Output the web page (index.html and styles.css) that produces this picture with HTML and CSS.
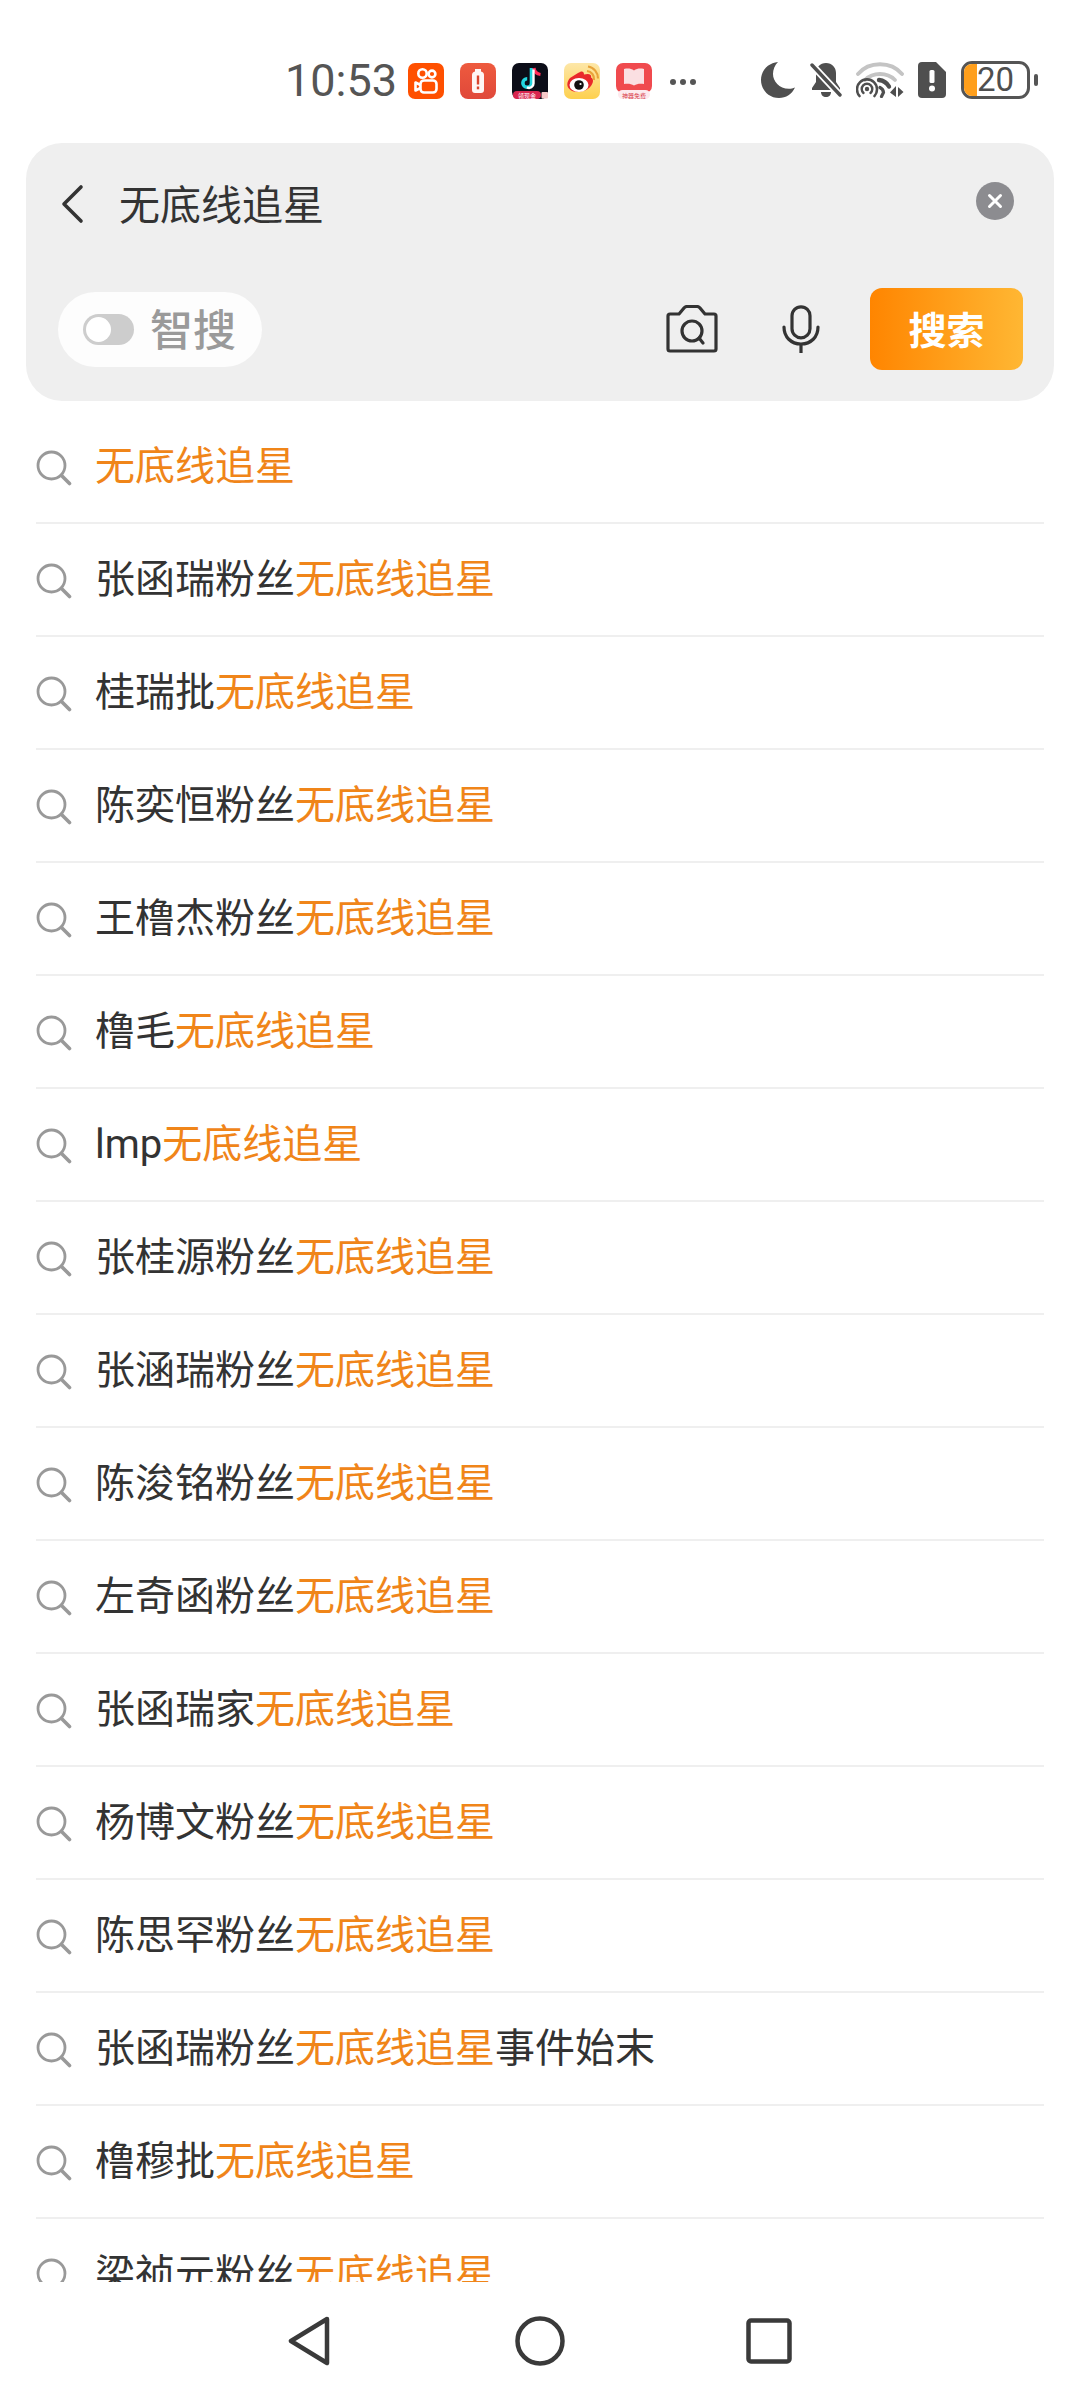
FILE: index.html
```html
<!DOCTYPE html>
<html lang="zh">
<head>
<meta charset="utf-8">
<title>无底线追星</title>
<link rel="stylesheet" href="styles.css">
</head>
<body>
<div class="screen">
  <header class="status">
    <span class="time">10:53</span>
    <div class="apps">
      <svg class="app" viewBox="0 0 36 36"><rect width="36" height="36" rx="7" fill="#ff5000"/><g fill="none" stroke="#fff" stroke-width="2.6" stroke-linejoin="round"><circle cx="14.5" cy="10.5" r="4.2"/><circle cx="24" cy="11" r="3.4"/><rect x="12.5" y="17.5" width="16" height="12" rx="3.5"/><path d="M12.5 22 7.5 19.5v8l5-2.5"/></g></svg>
      <svg class="app" viewBox="0 0 36 36"><defs><linearGradient id="redg" x1="0" y1="0" x2="0" y2="1"><stop offset="0" stop-color="#ee5a3e"/><stop offset="1" stop-color="#e0483a"/></linearGradient></defs><rect width="36" height="36" rx="8" fill="url(#redg)"/><path d="M15 6h6v2.500c2 .5 3 1.800 3 3.500v15a3 3 0 0 1-3 3h-6a3 3 0 0 1-3-3V12c0-1.700 1-3 3-3.500z" fill="#fff" opacity=".95"/><rect x="16.800" y="12.500" width="2.400" height="9" fill="#d9452f"/><rect x="16.800" y="23.500" width="2.400" height="2.800" fill="#d9452f"/></svg>
      <svg class="app" viewBox="0 0 36 36"><rect width="36" height="36" rx="7" fill="#0b0d18"/><path d="M19.500 5v15a4.300 4.300 0 1 1-4.300-4.300" fill="none" stroke="#23d6df" stroke-width="3.600"/><path d="M22 5c.5 3.500 3 6 6.500 6.500" fill="none" stroke="#ff2e58" stroke-width="3.200"/><path d="M21.500 6.500v14a4.300 4.300 0 0 1-6.500 3.800" fill="none" stroke="#fff" stroke-width="2.400"/><rect x="1" y="28" width="28" height="8" rx="4" fill="#d8264f"/><rect x="29.500" y="29" width="6.500" height="6.500" rx="1" fill="#f6c9c9"/><text class="tiny" x="15" y="34.500" text-anchor="middle">领现金</text></svg>
      <svg class="app" viewBox="0 0 36 36"><defs><linearGradient id="wb" x1="0" y1="0" x2="0" y2="1"><stop offset="0" stop-color="#fde7a8"/><stop offset="1" stop-color="#fdd04e"/></linearGradient></defs><rect width="36" height="36" rx="7" fill="url(#wb)"/><path d="M14 10c3.500-2.500 6-2 6 1.500 5-1.500 8 0 7 3 3 1.200 2.500 5.500-.5 9-4 5-14 7.500-20 3.500-4.300-3-4-8-.5-12z" fill="#e9282b"/><ellipse cx="15" cy="22" rx="9.500" ry="7" fill="#fff"/><circle cx="15" cy="22" r="4.800" fill="#111"/><circle cx="16.500" cy="21" r="1.100" fill="#fff"/><path d="M23 8a8 8 0 0 1 7 9M24 3.500a12 12 0 0 1 10 12" fill="none" stroke="#e8a33a" stroke-width="2.200"/></svg>
      <svg class="app" viewBox="0 0 36 36"><rect width="36" height="30" rx="7" fill="#f04a4e"/><rect x="2" y="27" width="32" height="9" rx="4.500" fill="#fdeaee"/><path d="M8 6c4-1 7-.5 10 1.500 3-2 6-2.500 10-1.500v15c-4-.8-7-.3-10 1.500-3-1.800-6-2.300-10-1.500z" fill="#fbdfe2"/><text class="tiny tiny-red" x="18" y="34.500" text-anchor="middle">神器免费</text></svg>
    </div>
    <div class="dots"><i></i><i></i><i></i></div>
    <div class="sys">
      <svg class="moon" viewBox="0 0 34 36"><path d="M17 0C7 1 0 8.500 0 18c0 10 8 18 18 18 7 0 13-4 16-10.500-2 1-4 1.300-6 1.300C18 26.800 12 19 12 12c0-4.500 1.800-9 5-12z" fill="#4f4f4f"/></svg>
      <svg class="bell" viewBox="0 0 32 36"><path d="M16 1c6 0 10 4.500 10 10v9l4 6v2H2v-2l4-6v-9C6 5.500 10 1 16 1z" fill="#4f4f4f"/><path d="M11 30h10c0 3-2 5-5 5s-5-2-5-5z" fill="#4f4f4f"/><path d="M2 3l28 30" stroke="#fff" stroke-width="7"/><path d="M2 3l28 30" stroke="#4f4f4f" stroke-width="3.400" stroke-linecap="round"/></svg>
      <svg class="wifi" viewBox="0 0 48 36"><g fill="none" stroke-linecap="round"><path d="M2 12C13 -1 35 -1 46 12" stroke="#c4c4c4" stroke-width="3.800"/><path d="M9 18c8-8 22-8 30 0" stroke="#c4c4c4" stroke-width="3.800"/><path d="M3.500 34a10 10 0 1 1 15 0" stroke="#4f4f4f" stroke-width="2.600"/><path d="M7.500 31a5.300 5.300 0 1 1 7 0" stroke="#4f4f4f" stroke-width="2.400"/><path d="M23 18c4 .5 8 3 10 6.500" stroke="#4f4f4f" stroke-width="4.400"/><path d="M24 25.500c2 1 3.300 2.800 3.500 5l-2 4" stroke="#4f4f4f" stroke-width="3.200"/></g><circle cx="11" cy="27" r="2.200" fill="#4f4f4f"/><path d="M40 24v11l-6-4.500zM42 25v10l5.500-5z" fill="#4f4f4f"/></svg>
      <svg class="sim" viewBox="0 0 28 36"><path d="M4 0h14l10 10v22a4 4 0 0 1-4 4H4a4 4 0 0 1-4-4V4a4 4 0 0 1 4-4z" fill="#4f4f4f"/><rect x="11.500" y="8" width="5" height="13" rx="1.500" fill="#fff"/><circle cx="14" cy="26.500" r="3" fill="#fff"/></svg>
      <div class="battery"><span class="charge"></span><span class="level">20</span></div>
      <span class="tip"></span>
    </div>
  </header>

  <section class="panel">
    <div class="query">
      <svg class="back" viewBox="0 0 24 40"><path d="M21 3 4 20l17 17" fill="none" stroke="#333" stroke-width="3.600" stroke-linecap="round" stroke-linejoin="round"/></svg>
      <span class="term">无底线追星</span>
      <span class="clear"><svg viewBox="0 0 38 38"><path d="M13.500 13.500l11 11m0-11l-11 11" stroke="#fff" stroke-width="3" stroke-linecap="round"/></svg></span>
    </div>
    <div class="tools">
      <div class="pill"><span class="toggle"><i></i></span><span class="pill-label">智搜</span></div>
      <svg class="camera" viewBox="0 0 52 48"><path d="M4 9h9l5-6c.8-1 1.500-1.500 3-1.500h10c1.500 0 2.200.5 3 1.500l5 6h9c1.200 0 2 .8 2 2v33c0 1.200-.8 2-2 2H4c-1.200 0-2-.8-2-2V11c0-1.200.8-2 2-2z" fill="none" stroke="#333" stroke-width="3.200" stroke-linejoin="round"/><circle cx="26" cy="26" r="10" fill="none" stroke="#333" stroke-width="3.200"/><path d="M33 33l4 5" stroke="#333" stroke-width="3.200" stroke-linecap="round"/></svg>
      <svg class="mic" viewBox="0 0 38 48"><rect x="10" y="1.800" width="18" height="31" rx="9" fill="none" stroke="#333" stroke-width="3.200"/><path d="M2 22c0 10 7 17 17 17s17-7 17-17M19 39v9" fill="none" stroke="#333" stroke-width="3.200" stroke-linecap="round"/></svg>
      <button class="go">搜索</button>
    </div>
  </section>

  <ul class="list">
    <li class="row"><svg class="glass" viewBox="0 0 36 36"><use href="#glass"/></svg><span><em>无底线追星</em></span></li>
    <li class="row"><svg class="glass" viewBox="0 0 36 36"><use href="#glass"/></svg><span>张函瑞粉丝<em>无底线追星</em></span></li>
    <li class="row"><svg class="glass" viewBox="0 0 36 36"><use href="#glass"/></svg><span>桂瑞批<em>无底线追星</em></span></li>
    <li class="row"><svg class="glass" viewBox="0 0 36 36"><use href="#glass"/></svg><span>陈奕恒粉丝<em>无底线追星</em></span></li>
    <li class="row"><svg class="glass" viewBox="0 0 36 36"><use href="#glass"/></svg><span>王橹杰粉丝<em>无底线追星</em></span></li>
    <li class="row"><svg class="glass" viewBox="0 0 36 36"><use href="#glass"/></svg><span>橹毛<em>无底线追星</em></span></li>
    <li class="row"><svg class="glass" viewBox="0 0 36 36"><use href="#glass"/></svg><span>lmp<em>无底线追星</em></span></li>
    <li class="row"><svg class="glass" viewBox="0 0 36 36"><use href="#glass"/></svg><span>张桂源粉丝<em>无底线追星</em></span></li>
    <li class="row"><svg class="glass" viewBox="0 0 36 36"><use href="#glass"/></svg><span>张涵瑞粉丝<em>无底线追星</em></span></li>
    <li class="row"><svg class="glass" viewBox="0 0 36 36"><use href="#glass"/></svg><span>陈浚铭粉丝<em>无底线追星</em></span></li>
    <li class="row"><svg class="glass" viewBox="0 0 36 36"><use href="#glass"/></svg><span>左奇函粉丝<em>无底线追星</em></span></li>
    <li class="row"><svg class="glass" viewBox="0 0 36 36"><use href="#glass"/></svg><span>张函瑞家<em>无底线追星</em></span></li>
    <li class="row"><svg class="glass" viewBox="0 0 36 36"><use href="#glass"/></svg><span>杨博文粉丝<em>无底线追星</em></span></li>
    <li class="row"><svg class="glass" viewBox="0 0 36 36"><use href="#glass"/></svg><span>陈思罕粉丝<em>无底线追星</em></span></li>
    <li class="row"><svg class="glass" viewBox="0 0 36 36"><use href="#glass"/></svg><span>张函瑞粉丝<em>无底线追星</em>事件始末</span></li>
    <li class="row"><svg class="glass" viewBox="0 0 36 36"><use href="#glass"/></svg><span>橹穆批<em>无底线追星</em></span></li>
    <li class="row"><svg class="glass" viewBox="0 0 36 36"><use href="#glass"/></svg><span>梁祯元粉丝<em>无底线追星</em></span></li>
  </ul>

  <nav class="nav">
    <svg class="nav-back" viewBox="0 0 44 50"><path d="M40 3 4 25l36 22z" fill="none" stroke="#3a3a3a" stroke-width="4.500" stroke-linejoin="round"/></svg>
    <svg class="nav-home" viewBox="0 0 50 50"><circle cx="25" cy="25" r="22.500" fill="none" stroke="#3a3a3a" stroke-width="4.500"/></svg>
    <svg class="nav-recent" viewBox="0 0 46 46"><rect x="2.500" y="2.500" width="41" height="41" rx="2.500" fill="none" stroke="#3a3a3a" stroke-width="4.500"/></svg>
  </nav>
</div>
<svg class="defs" width="0" height="0"><defs><g id="glass"><circle cx="15.500" cy="15.500" r="13.500" fill="none" stroke="#999" stroke-width="2.800"/><path d="M25.500 25.500l8 8" stroke="#999" stroke-width="3.600" stroke-linecap="round"/></g></defs></svg>
</body>
</html>
```

FILE: styles.css
```css
* { box-sizing: border-box; }
html, body { margin: 0; padding: 0; background: #fff; }
body { font-family: "Noto Sans CJK SC", "Noto Sans", sans-serif; color: #333; }
.screen { width: 1080px; height: 2400px; display: flex; flex-direction: column; overflow: hidden; }
.defs { position: absolute; }

.status { height: 143px; flex: none; display: flex; align-items: flex-start; padding: 61px 0 0 285px; }
.time { font: 400 45px/40px Roboto, sans-serif; color: #555; width: 123px; flex: none; }
.apps { display: flex; gap: 16px; margin-top: 2px; }
.app { width: 36px; height: 36px; display: block; }
.tiny { font-family: "Noto Sans CJK SC", sans-serif; font-size: 6px; fill: #fff; }
.tiny-red { fill: #d8404a; }
.dots { display: flex; gap: 4px; margin: 18px 0 0 18px; width: 91px; }
.dots i { width: 6px; height: 6px; border-radius: 50%; background: #555; }
.sys { display: flex; align-items: center; height: 38px; }
.moon { width: 34px; height: 36px; }
.bell { width: 32px; height: 36px; margin-left: 15px; }
.wifi { width: 48px; height: 36px; margin-left: 14px; }
.sim { width: 28px; height: 36px; margin-left: 14px; }
.battery { position: relative; width: 69px; height: 38px; margin-left: 15px; border: 3px solid #555; border-radius: 11px; overflow: hidden; display: flex; align-items: center; justify-content: center; }
.charge { position: absolute; left: 0; top: 0; bottom: 0; width: 13px; background: #ff9f1c; }
.level { position: relative; font: 400 33px/32px Roboto, sans-serif; color: #4f4f4f; }
.tip { width: 4px; height: 12px; border-radius: 2px; background: #555; margin-left: 4px; }

.panel { flex: none; margin: 0 26px; height: 258px; background: #efefef; border-radius: 36px; display: flex; flex-direction: column; }
.query { height: 145px; display: flex; align-items: flex-start; padding: 39px 0 0 34px; }
.back { width: 24px; height: 40px; flex: none; margin-top: 2px; }
.term { font-size: 41px; line-height: 44px; color: #333; margin: -2px 0 0 35px; flex: 1; }
.clear { width: 38px; height: 38px; flex: none; margin: 0 40px 0 0; border-radius: 50%; background: #8c8c90; }
.clear svg { display: block; width: 38px; height: 38px; }
.tools { display: flex; align-items: center; height: 82px; padding: 0 31px 0 32px; }
.pill { width: 204px; height: 75px; border-radius: 38px; background: #fdfdfd; display: flex; align-items: center; padding-left: 25px; }
.toggle { width: 51px; height: 31px; border-radius: 16px; background: #cdcdcd; padding: 3px; display: block; flex: none; }
.toggle i { display: block; width: 25px; height: 25px; border-radius: 50%; background: #fff; }
.pill-label { font-size: 43px; font-weight: 500; line-height: 50px; color: #9a9a9a; margin: 0 0 4px 16px; }
.camera { width: 52px; height: 48px; margin-left: 404px; flex: none; }
.mic { width: 38px; height: 48px; margin-left: 64px; flex: none; }
.go { width: 153px; height: 82px; margin-left: 50px; flex: none; border: 0; padding: 0 0 2px; border-radius: 12px; background: linear-gradient(90deg, #ff8500, #ffb733); color: #fff; font: 700 38px/44px "Noto Sans CJK SC", sans-serif; }

.list { flex: none; height: 1871px; margin: 10px 0 0; padding: 0 36px; list-style: none; overflow: hidden; }
.row { height: 113px; display: flex; align-items: center; gap: 23px; padding-top: 1px; border-bottom: 2px solid #efefef; font-family: Roboto, "Noto Sans CJK SC", sans-serif; font-size: 40px; line-height: 50px; color: #333; }
.row em { font-style: normal; color: #f08519; }
.glass { width: 36px; height: 36px; flex: none; margin-top: 2px; }

.nav { flex: 1; display: flex; align-items: flex-start; padding: 34px 0 0 287px; }
.nav-back { width: 44px; height: 50px; flex: none; }
.nav-home { width: 50px; height: 50px; margin-left: 184px; flex: none; }
.nav-recent { width: 46px; height: 46px; margin: 2px 0 0 181px; flex: none; }
```
